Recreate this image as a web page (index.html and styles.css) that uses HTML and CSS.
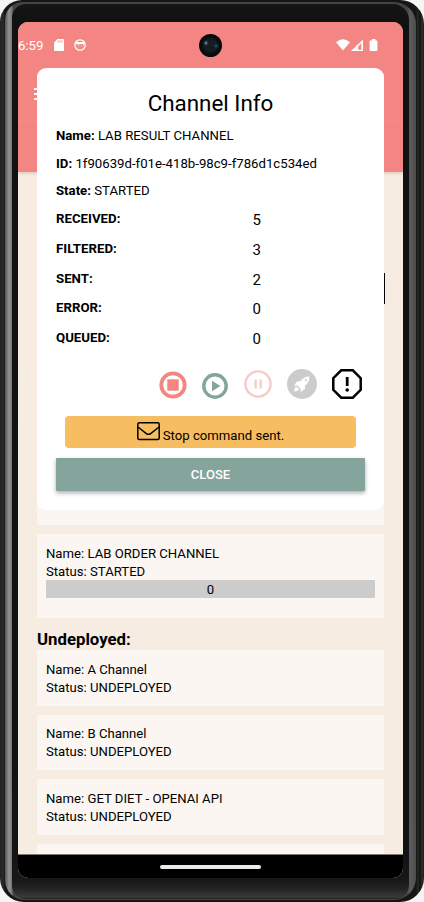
FILE: index.html
```html
<!DOCTYPE html>
<html lang="en">
<head>
<meta charset="utf-8">
<title>Channel Info</title>
<link rel="stylesheet" href="styles.css">
</head>
<body>
<div class="phone">
  <div class="rail">
  <div class="bezel">
  <div class="screen">
    <header class="header">
      <div class="status">
        <span class="clock">6:59</span>
        <svg class="sd" width="10" height="12" viewBox="0 0 10 12"><path d="M3.5 0H9a1 1 0 0 1 1 1v10a1 1 0 0 1-1 1H1a1 1 0 0 1-1-1V3.5z" fill="#fff"/><path d="M4 1.5v2M6 1.5v2M8 1.5v2" stroke="#f38682" stroke-width=".9"/></svg>
        <svg class="face" width="12" height="12" viewBox="0 0 12 12"><circle cx="6" cy="6" r="5.2" fill="none" stroke="#fff" stroke-width="1.3"/><path d="M2 2.2 4 3h4l2-.8V6Q8 4.7 6 5.2 3.5 5.8 2 5z" fill="#fff"/><path d="M4 7.2h.8M7.4 7.2h.8" stroke="#fff"/></svg>
        <span class="camera"></span>
        <svg class="signals" width="42" height="13" viewBox="0 0 42 13"><path d="M0 3.2Q7-2.600 14 3.200L7 11.500z" fill="#fff"/><path d="M27 .5V12H15z" fill="#fff"/><path d="M25.400 4.300v6.400h-3.200V7.400z" fill="#f38682"/><path d="M35 1.400h1V0h3.400v1.400h1a1 1 0 0 1 1 1V11a1 1 0 0 1-1 1h-5.800a1 1 0 0 1-1-1V2.400a1 1 0 0 1 1-1z" fill="#fff"/></svg>
      </div>
      <div class="toolbar"><span class="menu"><i></i><i></i><i></i></span></div>
    </header>
    <main class="content">
      <section class="covered"><span class="edge"></span></section>
      <section class="card deployed">
        <p>Name: LAB ORDER CHANNEL</p><p>Status: STARTED</p><div class="count">0</div>
      </section>
      <h2>Undeployed:</h2>
      <section class="card"><p>Name: A Channel</p><p>Status: UNDEPLOYED</p></section>
      <section class="card"><p>Name: B Channel</p><p>Status: UNDEPLOYED</p></section>
      <section class="card"><p>Name: GET DIET - OPENAI API</p><p>Status: UNDEPLOYED</p></section>
      <section class="card"></section>
    </main>
    <nav class="navbar"><span></span></nav>

    <div class="modal" role="dialog">
      <h1>Channel Info</h1>
      <p class="info name"><b>Name:</b> LAB RESULT CHANNEL</p>
      <p class="info id"><b>ID:</b> 1f90639d-f01e-418b-98c9-f786d1c534ed</p>
      <p class="info"><b>State:</b> STARTED</p>
      <dl class="stats">
        <dt>RECEIVED:</dt><dd>5</dd>
        <dt>FILTERED:</dt><dd>3</dd>
        <dt>SENT:</dt><dd>2</dd>
        <dt>ERROR:</dt><dd>0</dd>
        <dt>QUEUED:</dt><dd>0</dd>
      </dl>
      <div class="actions">
        <svg width="28" height="28" viewBox="0 0 28 28"><circle cx="14" cy="14" r="11.700" fill="none" stroke="#f38682" stroke-width="3.800"/><rect x="8.300" y="8.300" width="11.400" height="11.400" fill="#f38682"/></svg>
        <svg width="26" height="26" viewBox="0 0 26 26"><circle cx="13" cy="13" r="11.200" fill="none" stroke="#85a59c" stroke-width="3.400"/><path d="M10 7.800v10.400l8.400-5.200z" fill="#85a59c"/></svg>
        <svg class="pause" width="28" height="28" viewBox="0 0 28 28"><circle cx="14" cy="14" r="12.600" fill="none" stroke="#f6cbc5" stroke-width="2.400"/><path d="M11.600 9.400v9.200M16.700 9.400v9.200" stroke="#f6cbc5" stroke-width="2.300"/></svg>
        <svg class="rocket" width="30" height="30" viewBox="0 0 30 30"><circle cx="15" cy="15" r="15" fill="#ccc"/><path d="M22.400 7.500Q17 7.200 13.700 12L10 12.400 7.100 16.700l3.300-.2 3.200 3.300-.1 3.200 4.200-2.700.5-4Q22.700 13 22.400 7.500z" fill="#fff"/><circle cx="18.800" cy="11.200" r="1.100" fill="#ccc"/><path d="M8.800 17.700q-1.800 1.800-1.600 4.900 3.300 0 4.800-1.800-.4-2.300-3.200-3.100z" fill="#fff"/></svg>
        <svg class="alert" width="30" height="30" viewBox="0 0 30 30"><path d="M9.200 1.300h11.600l7.900 7.900v11.600l-7.900 7.900H9.200l-7.900-7.900V9.200z" fill="none" stroke="#000" stroke-width="2.500"/><path d="M15.200 8v9" stroke="#000" stroke-width="2.800"/><circle cx="15.200" cy="21" r="1.800"/></svg>
      </div>
      <div class="notice">
        <svg width="23" height="19" viewBox="0 0 23 19"><rect x=".8" y=".8" width="21.400" height="16.600" rx="1.500" fill="none" stroke="#000" stroke-width="1.500"/><path d="M1 5q4 3.200 8 6.400 2.500 2 5 0Q18 8.200 22 5" fill="none" stroke="#000" stroke-width="1.400"/></svg>
        <span>Stop command sent.</span>
      </div>
      <button class="close">CLOSE</button>
    </div>
  </div>
  </div>
  </div>
</div>
</body>
</html>
```
FILE: styles.css
```css
* { box-sizing: border-box; margin: 0; padding: 0; }
body { width: 424px; height: 902px; overflow: hidden; background: #f5f5f5; font-family: Roboto, sans-serif; color: #000; }
.phone { height: 902px; padding: 2px 8px 2px 5px; border-radius: 22px 24px 24px 24px; background: linear-gradient(90deg, #202121 0, #2b2c2c 3px, #151515 5px, #151515 416px, #292929 418px, #111 420px, #303030 422px, #1c1c1c 424px); }
.rail { height: 898px; padding: 2px 7px 1px; border-radius: 18px 22px 22px 20px; background: linear-gradient(90deg, #555 0, #929292 4px, #777 7px, #444 8px, #444 402px, #5c5c5c 405px, #4c4c4c 411px); }
.bezel { height: 895px; padding: 18px 6px 22px; border-radius: 14px 16px 14px 14px; background: linear-gradient(180deg, #151515 0, #111 20px, #111315 850px, #181818 876px, #222 884px, #3a3a3a 893px, #202020 895px); }
.screen { position: relative; width: 385px; height: 856px; overflow: hidden; border-radius: 10px; background: #f6ece1; display: flex; flex-direction: column; }
.header { z-index: 1; height: 150px; flex: none; background: #f38682; box-shadow: 0 1px 3px #9b80725c; }
.status { height: 46px; padding-right: 25px; display: flex; align-items: center; color: #fff; }
.clock { width: 36px; padding-top: 1px; font-size: 13.200px; line-height: 16px; }
.face { margin-left: 10px; }
.camera { width: 23px; height: 23px; margin-left: 113px; border-radius: 50%; background: radial-gradient(circle at 7px 9px, #bde3ee 0, #334e5c 1px, transparent 3px), radial-gradient(circle at 17px 12px, #315b83 0, #14202c 2px, transparent 4px), radial-gradient(circle, #151c1f 0 6px, #080a0b 9px); }
.signals { margin-left: auto; }
.toolbar { height: 54px; padding: 20px 0 0 16px; border-bottom: 1px solid #ef9089; }
.menu { display: flex; flex-direction: column; gap: 3px; width: 18px; }
.menu i { height: 2px; background: #fff; }
.content { flex: 1; min-height: 0; overflow: hidden; padding: 0 19px; border-bottom: 1px solid #80796f; }
.covered { height: 353px; margin-bottom: 9px; display: flex; justify-content: flex-end; background: linear-gradient(#f6ece1 250px, #fbf6f2 250px); }
.edge { width: 1px; height: 31px; margin: 101px -1px 0 0; background: #000; }
.card { height: 55.500px; margin-bottom: 9px; padding: 10.900px 9px 0; background: #fbf6f2; font-size: 13.150px; line-height: 18px; }
.deployed { height: 84px; }
.count { height: 18px; margin-top: -1px; padding-top: 1px; background: #ccc; text-align: center; }
h2 { font-size: 16.800px; line-height: 25px; height: 23px; font-weight: 700; }
.navbar { height: 23px; flex: none; background: #000; display: flex; justify-content: center; padding-top: 10px; }
.navbar span { width: 101px; height: 4px; border-radius: 2px; background: #e8eceb; }
.modal { position: absolute; z-index: 2; left: 19px; top: 46px; width: 347px; height: 442px; padding: 21px 19px 0; border-radius: 9px; background: #fff; }
h1 { font-size: 22.400px; line-height: 28px; font-weight: 400; text-align: center; }
.info { margin-top: 9.500px; font-size: 13.200px; line-height: 18px; }
.name { margin-top: 10px; }
.stats { margin-top: 5px; display: grid; grid-template-columns: 30% 70%; grid-auto-rows: 29.750px; }
dt { font-size: 13.250px; font-weight: 700; line-height: 28px; }
dd { font-size: 15px; line-height: 30px; text-align: center; }
.actions { height: 30px; margin-top: 15.250px; padding: 0 3px 0 103px; display: flex; justify-content: space-between; align-items: flex-end; }
.rocket { align-self: flex-start; }
.pause { align-self: center; }
.notice { height: 32px; margin: 16.500px 9px 10px; border-radius: 4px; background: #f6bd61; display: flex; justify-content: center; align-items: center; gap: 3px; font-size: 13.150px; }
.notice span { padding-top: 7px; }
.close { display: block; width: 100%; height: 33px; padding-top: 1px; border: 0; border-radius: 1px; background: #85a59c; color: #fff; font: 500 13px Roboto, sans-serif; box-shadow: 0 2px 4px #0005; }
```
